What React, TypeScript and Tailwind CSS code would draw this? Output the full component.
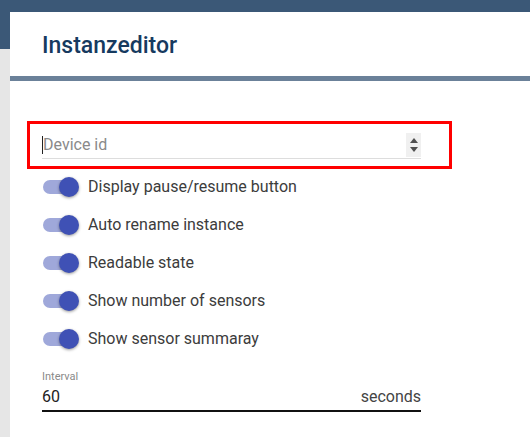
import React from "react";

const OPTIONS = [
  "Display pause/resume button",
  "Auto rename instance",
  "Readable state",
  "Show number of sensors",
  "Show sensor summaray",
];

function Toggle() {
  return (
    <div className="relative w-[36px] h-[20px] flex items-center shrink-0">
      <div className="w-[34px] h-[14px] rounded-full bg-[#9fa8da]" />
      <div className="absolute right-0 top-0 w-[20px] h-[20px] rounded-full bg-[#3f51b5] shadow-[0_1px_3px_rgba(0,0,0,0.4)]" />
    </div>
  );
}

export default function App() {
  return (
    <div className="w-[530px] h-[437px] bg-[#e6e6e6] overflow-hidden flex flex-col" style={{ fontFamily: "Roboto, 'Liberation Sans', sans-serif" }}>
      <div className="h-[12px] bg-[#3b5877] shrink-0" />
      <div className="flex flex-1">
        <div className="w-[10px] shrink-0">
          <div className="h-[37px] bg-[#3b5877]" />
        </div>
        <div className="flex-1 bg-white flex flex-col">
          <div className="h-[64px] flex items-center pl-[32px] pt-[3px]">
            <h2 className="text-[23px] font-medium text-[#163a5f] leading-[28px]">Instanzeditor</h2>
          </div>
          <div className="h-[5px] bg-[#6b8199]" />

          <div className="pl-[17px] pt-[40px]">
            <div className="w-[425px] h-[48px] border-[3px] border-[#ff0000] pl-[12px] pr-[28px] pt-[8px]">
              <div className="flex items-center h-[27px] border-b border-[#dddddd]">
                <div className="w-px h-[18px] bg-[#222]" />
                <span className="flex-1 text-[16px] text-[#8a8a8a]">Device id</span>
                <div className="w-[15px] h-[24px] bg-[#f0f0f0] flex flex-col items-center justify-center gap-[4px] mb-[1px]">
                  <svg width="8" height="5" viewBox="0 0 8 5"><path d="M0 5 L4 0 L8 5Z" fill="#505050" /></svg>
                  <svg width="8" height="5" viewBox="0 0 8 5"><path d="M0 0 L4 5 L8 0Z" fill="#505050" /></svg>
                </div>
              </div>
            </div>
          </div>

          <div className="pl-[33px] pt-0 -mt-[1px] flex flex-col">
            {OPTIONS.map(o => (
              <div key={o} className="h-[38px] flex items-center gap-[9px]">
                <Toggle />
                <span className="text-[16px] text-[#3c3c3c]">{o}</span>
              </div>
            ))}
          </div>

          <div className="pl-[32px] pt-[12px] w-[411px]">
            <div className="text-[11px] text-[#8a8a8a] leading-[14px]">Interval</div>
            <div className="flex items-end h-[28px] border-b-2 border-[#111]">
              <span className="flex-1 text-[16px] text-[#222] leading-[20px] pb-[3px]">60</span>
              <span className="text-[16px] text-[#444] leading-[20px] pb-[3px]">seconds</span>
            </div>
          </div>
        </div>
      </div>
    </div>
  );
}
